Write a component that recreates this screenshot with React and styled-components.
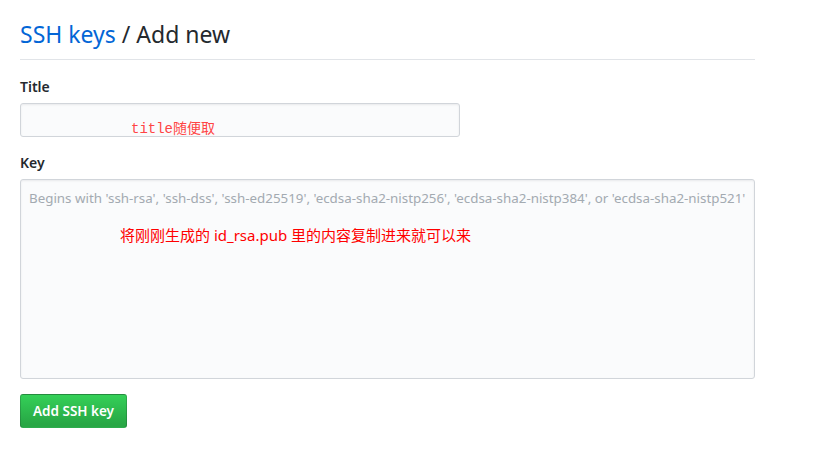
import styled, { createGlobalStyle } from "styled-components";

const GlobalStyle = createGlobalStyle`
  body {
    margin: 0;
    background: #fff;
    font-family: "Noto Sans", "Liberation Sans", sans-serif;
    color: #24292e;
  }
`;

export default function App() {
  return (
    <>
      <GlobalStyle />
      <Page>
        <Heading>
          <HeadingLink href="#">SSH keys</HeadingLink> / Add new
        </Heading>
        <Form>
          <Field>
            <Label>Title</Label>
            <FieldBox>
              <TitleInput type="text" />
              <Note $left={111} $top={16} $mono>
                title随便取
              </Note>
            </FieldBox>
          </Field>
          <Field $last>
            <Label>Key</Label>
            <FieldBox>
              <KeyArea placeholder="Begins with 'ssh-rsa', 'ssh-dss', 'ssh-ed25519', 'ecdsa-sha2-nistp256', 'ecdsa-sha2-nistp384', or 'ecdsa-sha2-nistp521'" />
              <Note $left={100} $top={46}>
                将刚刚生成的 id_rsa.pub 里的内容复制进来就可以来
              </Note>
            </FieldBox>
          </Field>
          <SubmitButton type="submit">Add SSH key</SubmitButton>
        </Form>
      </Page>
    </>
  );
}

const Page = styled.div`
  width: 735px;
  padding: 16px 20px 0;
`;

const Heading = styled.h1`
  margin: 0 0 17px;
  padding-bottom: 7px;
  border-bottom: 1px solid #e1e4e8;
  font-size: 23px;
  font-weight: 400;
  line-height: 36px;
  color: #24292e;
`;

const HeadingLink = styled.a`
  color: #0366d6;
  text-decoration: none;
`;

const Form = styled.form`
  display: flex;
  flex-direction: column;
  align-items: flex-start;
`;

const Field = styled.div`
  display: flex;
  flex-direction: column;
  margin-bottom: ${({ $last }) => ($last ? "15px" : "16px")};
  width: 100%;
`;

const Label = styled.label`
  font-size: 14px;
  font-weight: 600;
  line-height: 20px;
  margin-bottom: 6px;
  color: #24292e;
`;

const FieldBox = styled.div`
  position: relative;
`;

const inputStyles = `
  box-sizing: border-box;
  display: block;
  background: #fafbfc;
  border: 1px solid #d1d5da;
  border-radius: 3px;
  box-shadow: inset 0 1px 2px rgba(27, 31, 35, 0.075);
  font-family: "Noto Sans", "Liberation Sans", sans-serif;
  font-size: 14px;
  color: #24292e;
  outline: none;
`;

const TitleInput = styled.input`
  ${inputStyles}
  width: 440px;
  height: 34px;
  padding: 6px 8px;
`;

const KeyArea = styled.textarea`
  ${inputStyles}
  width: 735px;
  height: 200px;
  padding: 8px;
  resize: none;
  font-size: 13.35px;
  line-height: 20px;
  white-space: pre;
  overflow: hidden;

  &::placeholder {
    color: #a3aab1;
  }
`;

const Note = styled.span`
  position: absolute;
  left: ${({ $left }) => $left}px;
  top: ${({ $top }) => $top}px;
  color: ${({ $mono }) => ($mono ? "#f44" : "#f00")};
  font-family: ${({ $mono }) =>
    $mono
      ? `"Liberation Mono", "Noto Sans CJK SC", monospace`
      : `"Noto Sans", "Noto Sans CJK SC", sans-serif`};
  font-size: ${({ $mono }) => ($mono ? "14px" : "15px")};
  line-height: 20px;
  pointer-events: none;
  white-space: nowrap;
`;

const SubmitButton = styled.button`
  height: 34px;
  padding: 0 12px;
  font-family: "Noto Sans", "Liberation Sans", sans-serif;
  font-size: 13.5px;
  font-weight: 600;
  color: #fff;
  background-image: linear-gradient(-180deg, #34d058 0%, #28a745 90%);
  border: 1px solid rgba(27, 31, 35, 0.2);
  border-radius: 3px;
  cursor: pointer;
`;
